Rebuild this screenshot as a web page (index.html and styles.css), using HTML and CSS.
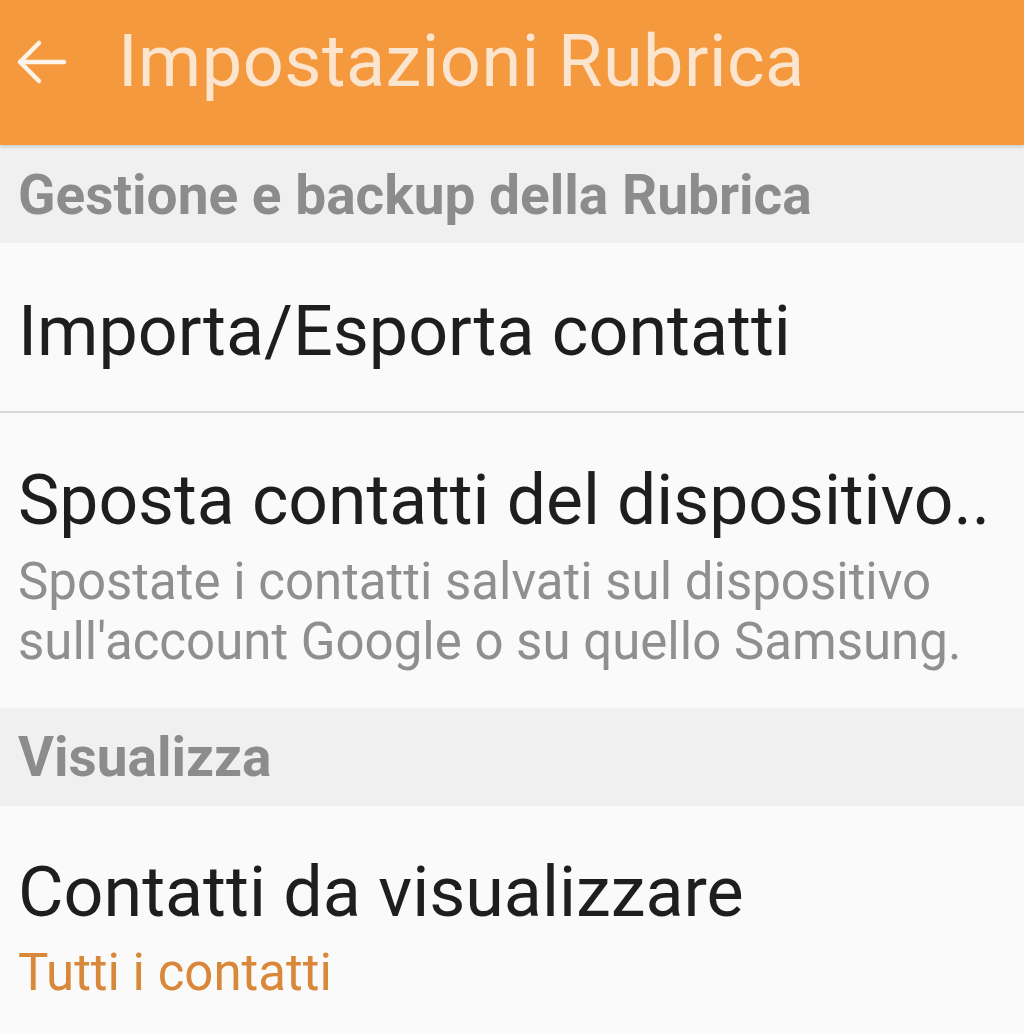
FILE: index.html
```html
<!DOCTYPE html>
<html lang="it">

<head>
    <meta charset="UTF-8" />
    <meta name="viewport" content="width=device-width, initial-scale=1.0" />
    <title>Impostazioni Rubrica</title>
    <link rel="stylesheet" href="styles.css">
</head>

<body>
    <!-- Barra superiore -->
    <header class="app-bar">
        <svg class="back" width="52" height="52" viewBox="0 0 52 52">
            <path d="M49 26H5M24 7L5 26l19 19" fill="none" stroke="#fdf3e8" stroke-width="4.5" stroke-linecap="round" stroke-linejoin="round" />
        </svg>
        <h1 class="title">Impostazioni Rubrica</h1>
    </header>

    <div class="section">Gestione e backup della Rubrica</div>

    <div class="item item-single">
        <div class="item-title">Importa/Esporta contatti</div>
    </div>
    <div class="divider"></div>
    <div class="item item-long">
        <div class="item-title">Sposta contatti del dispositivo..</div>
        <div class="item-sub">Spostate i contatti salvati sul dispositivo sull'account Google o su quello Samsung.</div>
    </div>

    <div class="section section-short">Visualizza</div>

    <div class="item">
        <div class="item-title">Contatti da visualizzare</div>
        <div class="item-value">Tutti i contatti</div>
    </div>
</body>

</html>
```
FILE: styles.css
```css
body {
    margin: 0;
    background: #fafafa;
    font-family: Roboto, 'Noto Sans', sans-serif;
    width: 1024px;
    height: 1034px;
    overflow: hidden;
}

.app-bar {
    height: 145px;
    background: #f5993f;
    display: flex;
    align-items: center;
    padding: 0 0 22px 15px;
    box-sizing: border-box;
    box-shadow: 0 2px 3px rgba(0, 0, 0, 0.18);
    position: relative;
}

.back {
    flex: none;
}

.title {
    margin: 0 0 0 51px;
    font-weight: 400;
    font-size: 72px;
    color: #fbe5cf;
    letter-spacing: 0.5px;
}

.section {
    background: #f0f0f0;
    height: 96px;
    margin-top: 2px;
    padding: 0 18px;
    display: flex;
    align-items: center;
    font-size: 55px;
    font-weight: 700;
    color: #8c8c8c;
}

.section-short {
    height: 98px;
    margin-top: 0;
}

.item {
    padding: 45px 18px 30px;
}

.item-long {
    padding-top: 46px;
    padding-bottom: 36px;
}

.item-single {
    height: 168px;
    box-sizing: border-box;
    display: flex;
    align-items: center;
    padding-top: 8px;
    padding-bottom: 0;
}

.item-title {
    font-size: 70px;
    color: #1e1e1e;
    white-space: nowrap;
}

.item-long .item-title {
    font-size: 69.6px;
}

.item-sub {
    font-size: 51px;
    line-height: 60px;
    color: #8f8f8f;
    margin-top: 11px;
}

.item-value {
    font-size: 51px;
    color: #d9883a;
    margin-top: 10px;
}

.divider {
    height: 2px;
    background: #d7d7d7;
}
```
